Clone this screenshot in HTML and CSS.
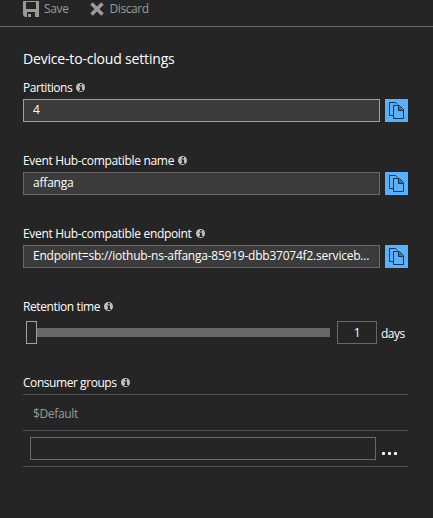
FILE: index.html
```html
<!DOCTYPE html>
<html lang="en">
<head>
<meta charset="utf-8">
<title>Device-to-cloud settings</title>
<link rel="stylesheet" href="styles.css">
</head>
<body>
<svg class="defs" width="0" height="0">
  <symbol id="info" viewBox="0 0 9 9"><circle cx="4.5" cy="4.5" r="4.5" fill="#bebebe"/><path d="M4 1h2v1.500H4zM3 3.500h3V7h1v1H3V7h1V4.500H3z" fill="#252525"/></symbol>
  <symbol id="copy" viewBox="0 0 23 23"><path d="M8 16.500H4.500V3.500h6l2 2M8.500 6.500h6l4 4v9h-10zM13.500 6.500v5h5" fill="none" stroke="#1c3145"/><path d="M13.500 6.500l5 5h-5z" fill="#1c3145" fill-opacity=".5"/></symbol>
</svg>
<header class="toolbar">
  <button class="command save"><svg width="16" height="16" viewBox="0 0 16 16"><path fill-rule="evenodd" d="M0 0h16v16H2L0 14zM3 1v7h10V1zM4 11v5h8v-5z" fill="#9a9a9a"/><path d="M5 13h3v3H5z" fill="#9a9a9a"/></svg><span>Save</span></button>
  <button class="command discard"><svg width="14" height="14" viewBox="0 0 14 14"><path d="M1.500 1.500l11 11M12.500 1.500l-11 11" stroke="#9a9a9a" stroke-width="3.500"/></svg><span>Discard</span></button>
</header>
<main class="settings">
  <h1><span>Device-to-cloud settings</span></h1>
  <section class="field">
    <div class="label"><span class="partitions">Partitions</span><svg class="info"><use href="#info"/></svg></div>
    <div class="row"><div class="input focused">4</div><button class="copy"><svg><use href="#copy"/></svg></button></div>
  </section>
  <section class="field">
    <div class="label"><span class="name">Event Hub-compatible name</span><svg class="info"><use href="#info"/></svg></div>
    <div class="row"><div class="input name-value">affanga</div><button class="copy"><svg><use href="#copy"/></svg></button></div>
  </section>
  <section class="field">
    <div class="label"><span class="endpoint">Event Hub-compatible endpoint</span><svg class="info"><use href="#info"/></svg></div>
    <div class="row"><div class="input"><span class="url">Endpoint=sb://iothub-ns-affanga-85919-dbb37074f2.serviceb...</span></div><button class="copy"><svg><use href="#copy"/></svg></button></div>
  </section>
  <section class="field retention">
    <div class="label"><span class="time">Retention time</span><svg class="info"><use href="#info"/></svg></div>
    <div class="slider"><div class="thumb"></div><div class="track"></div><div class="days">1</div><span class="unit">days</span></div>
  </section>
  <section class="groups">
    <div class="label"><span class="consumer">Consumer groups</span><svg class="info"><use href="#info"/></svg></div>
    <div class="group"><span>$Default</span></div>
    <div class="group entry"><div class="blank"></div><div class="more"><i></i><i></i><i></i></div></div>
  </section>
</main>
</body>
</html>
```
FILE: styles.css
```css
* { box-sizing: border-box; }
body { margin: 0; height: 518px; overflow: hidden; background: #252525; color: #fff; font: 12px/16px "Open Sans", "Noto Sans", sans-serif; letter-spacing: -0.35px; }
svg { display: block; flex: none; }
.defs { position: absolute; }
button { border: 0; padding: 0; background: none; color: inherit; font: inherit; letter-spacing: inherit; }
.toolbar { display: flex; height: 27px; padding-left: 23px; border-bottom: 1px solid #686868; color: #9a9a9a; }
.command { display: flex; align-items: flex-start; height: 18px; padding-top: 1px; gap: 5px; }
.command span { line-height: 16px; }
.discard { margin-left: 21px; gap: 6px; letter-spacing: -0.45px; }
.discard svg { margin-top: 1px; }
.settings { padding: 22px 25px 0 23px; }
h1 { margin: 0; height: 32px; font-size: 14px; line-height: 20px; font-weight: 400; letter-spacing: -0.18px; }
.field { height: 73px; }
.label { display: flex; height: 18px; line-height: 14px; gap: 4px; white-space: nowrap; }
.partitions, .consumer { letter-spacing: -0.44px; }
.time { letter-spacing: -0.4px; }
.name, .endpoint { letter-spacing: -0.32px; }
.name-value { letter-spacing: -0.2px; }
.url { letter-spacing: -0.23px; }
.info { width: 9px; height: 9px; margin-top: 2px; }
.row { display: flex; gap: 5px; }
.input { flex: 1; height: 23px; padding-left: 9px; border: 1px solid #686868; background: #3b3b3b; line-height: 20px; white-space: nowrap; }
.focused { border-color: #57b1fd; }
.copy { width: 23px; height: 23px; background: #57b1fd; }
.copy svg { width: 23px; height: 23px; }
.retention { height: 76px; }
.retention .label { height: 21px; }
.slider { display: flex; align-items: center; height: 23px; padding-left: 3px; }
.thumb { width: 11px; height: 23px; border: 1px solid #a0a0a0; }
.track { width: 293px; height: 9px; background: #686868; }
.days { width: 40px; height: 23px; margin-left: 7px; border: 1px solid #686868; line-height: 21px; text-align: center; }
.unit { margin-left: 4px; padding-top: 2px; letter-spacing: -0.5px; }
.groups .label { height: 18px; }
.group { display: flex; height: 36px; padding: 11px 0 0 10px; border-top: 1px solid #505050; color: #9a9a9a; line-height: 16px; }
.entry { height: 37px; padding: 6px 0 0 7px; border-bottom: 1px solid #505050; }
.blank { width: 346px; height: 23px; border: 1px solid #686868; }
.more { display: flex; gap: 3px; margin: 15px 0 0 6px; }
.more i { width: 3px; height: 3px; border-radius: 1px; background: #fff; }
```
